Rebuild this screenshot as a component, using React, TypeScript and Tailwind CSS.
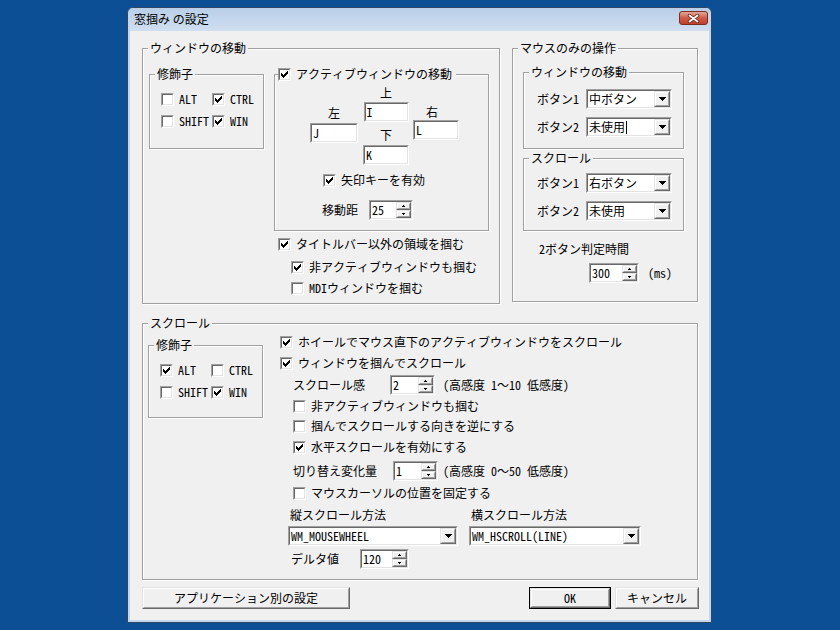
import type { ReactNode } from "react";

const face = "font-['Noto_Sans_Mono_CJK_JP','Noto_Sans_CJK_JP',sans-serif]";

type Box = { className?: string; children?: ReactNode };

// classic 3D edges
function Sunken({ className = "", children }: Box) {
  return (
    <div className={`shrink-0 border border-[#a0a0a0] border-r-white border-b-white ${className}`}>
      <div className="flex h-full w-full border border-[#696969] border-r-[#e3e3e3] border-b-[#e3e3e3] bg-white">
        {children}
      </div>
    </div>
  );
}

function Raised({ className = "", children }: Box) {
  return (
    <div className={`shrink-0 border border-[#e3e3e3] border-r-[#696969] border-b-[#696969] ${className}`}>
      <div className="flex h-full w-full items-center justify-center border border-white border-r-[#a0a0a0] border-b-[#a0a0a0] bg-[#f0f0f0]">
        {children}
      </div>
    </div>
  );
}

function Check({ on }: { on?: boolean }) {
  const tick = [
    [1, 3],
    [2, 4],
    [3, 5],
    [4, 4],
    [5, 3],
    [6, 2],
    [7, 1],
  ];
  return (
    <Sunken className="h-[13px] w-[13px]">
      {on && (
        <svg width="9" height="9" viewBox="0 0 9 9" className="block">
          {tick.map(([x, y]) => (
            <rect key={x} x={x} y={y} width="1" height="3" fill="#000" />
          ))}
        </svg>
      )}
    </Sunken>
  );
}

function CheckRow({ on, label, className = "" }: { on?: boolean; label: string; className?: string }) {
  return (
    <div className={`flex h-[14px] items-center gap-[5px] ${className}`}>
      <Check on={on} />
      <span className="whitespace-nowrap">{label}</span>
    </div>
  );
}

function GroupBox({
  label,
  labelClassName = "left-[5px] px-[2px]",
  className = "",
  children,
}: {
  label: ReactNode;
  labelClassName?: string;
  className?: string;
  children?: ReactNode;
}) {
  return (
    <div className={`relative shrink-0 border border-[#a0a0a0] shadow-[inset_1px_1px_0_#fff,1px_1px_0_#fff] ${className}`}>
      <div className={`absolute -top-[8px] flex h-[14px] items-center whitespace-nowrap bg-[#f0f0f0] ${labelClassName}`}>
        {label}
      </div>
      {children}
    </div>
  );
}

function Field({ value, className = "" }: { value: string; className?: string }) {
  return (
    <Sunken className={`h-[20px] ${className}`}>
      <span className="pl-[1px] pt-[1px]">{value}</span>
    </Sunken>
  );
}

function Spin({ value, className = "" }: { value: string; className?: string }) {
  return (
    <Sunken className={`h-[20px] ${className}`}>
      <span className="flex-1 pl-[1px] pt-[1px]">{value}</span>
      <div className="flex w-[15px] flex-col">
        <Raised className="h-[8px]">
          <svg width="3" height="2" className="block">
            <rect x="1" y="0" width="1" height="1" />
            <rect x="0" y="1" width="3" height="1" />
          </svg>
        </Raised>
        <Raised className="h-[8px]">
          <svg width="3" height="2" className="block">
            <rect x="0" y="0" width="3" height="1" />
            <rect x="1" y="1" width="1" height="1" />
          </svg>
        </Raised>
      </div>
    </Sunken>
  );
}

function Combo({ value, caret, className = "" }: { value: string; caret?: boolean; className?: string }) {
  return (
    <Sunken className={`h-[20px] ${className}`}>
      <span className="flex flex-1 items-center pl-[1px] whitespace-nowrap">
        {value}
        {caret && <span className="ml-[1px] h-[13px] w-px bg-black" />}
      </span>
      <Raised className="h-full w-[16px]">
        <svg width="7" height="4" className="block">
          <rect x="0" y="0" width="7" height="1" />
          <rect x="1" y="1" width="5" height="1" />
          <rect x="2" y="2" width="3" height="1" />
          <rect x="3" y="3" width="1" height="1" />
        </svg>
      </Raised>
    </Sunken>
  );
}

function ComboRow({ label, value, caret, className = "" }: { label: string; value: string; caret?: boolean; className?: string }) {
  return (
    <div className={`flex h-[20px] items-center ${className}`}>
      <span className="w-[49px] whitespace-nowrap">{label}</span>
      <Combo value={value} caret={caret} className="w-[86px]" />
    </div>
  );
}

function Modifiers({
  alt,
  ctrl,
  shift,
  win,
  className = "",
}: {
  alt?: boolean;
  ctrl?: boolean;
  shift?: boolean;
  win?: boolean;
  className?: string;
}) {
  return (
    <GroupBox label="修飾子" className={`w-[115px] pl-[11px] pt-[17px] ${className}`}>
      <div className="grid grid-cols-[51px_auto] gap-y-[8px]">
        <CheckRow on={alt} label="ALT" />
        <CheckRow on={ctrl} label="CTRL" />
        <CheckRow on={shift} label="SHIFT" />
        <CheckRow on={win} label="WIN" />
      </div>
    </GroupBox>
  );
}

function Button({ children, className = "", isDefault }: Box & { isDefault?: boolean }) {
  if (isDefault) {
    return (
      <div className={`h-[22px] border border-black ${className}`}>
        <Raised className="h-full w-full">{children}</Raised>
      </div>
    );
  }
  return <Raised className={`h-[22px] ${className}`}>{children}</Raised>;
}

function ActiveMove() {
  return (
    <GroupBox
      label={
        <>
          <Check on />
          <span>アクティブウィンドウの移動</span>
        </>
      }
      labelClassName="left-[3px] gap-[5px] pr-[4px]"
      className="h-[157px] w-[215px] pl-[35px] pt-[11px]"
    >
      <div className="flex items-start">
        <div className="mt-[20px] flex w-[48px] flex-col items-center">
          <span>左</span>
          <Field value="J" className="mt-[3px] w-[48px]" />
        </div>
        <div className="ml-[5px] flex w-[46px] flex-col items-center">
          <span>上</span>
          <Field value="I" className="mt-[2px] w-[45px]" />
          <span className="mt-[6px]">下</span>
          <Field value="K" className="mt-[3px] w-[46px]" />
        </div>
        <div className="ml-[4px] mt-[19px] flex w-[46px] flex-col">
          <span className="ml-[13px]">右</span>
          <Field value="L" className="mt-[1px] w-[46px]" />
        </div>
      </div>
      <CheckRow on label="矢印キーを有効" className="ml-[13px] mt-[8px]" />
      <div className="ml-[12px] mt-[13px] flex h-[20px] items-center">
        <span className="w-[47px]">移動距</span>
        <Spin value="25" className="w-[44px]" />
      </div>
    </GroupBox>
  );
}

export default function App() {
  return (
    <div className={`h-[630px] w-[840px] bg-[#0d4f95] pl-[127px] pt-[7px] text-[12px] leading-[14px] text-black ${face}`}>
      <div className="flex h-[616px] w-[585px] flex-col overflow-hidden rounded-t-[6px] border border-[#2d4866] bg-[#c4d6ec] px-[2px] pb-[2px]">
        {/* title bar */}
        <div className="flex h-[23px] shrink-0 items-start bg-gradient-to-b from-[#b9cee8] to-[#d0dff0] pl-[4px] pr-[1px]">
          <span className="mt-[4px] font-['Noto_Sans_CJK_JP',sans-serif]">窓掴み の設定</span>
          <div className="ml-auto mt-[3px] flex h-[14px] w-[29px] items-center justify-center rounded-[3px] border border-[#7a2d24] bg-gradient-to-b from-[#e3a597] via-[#cd5b47] to-[#c0402c]">
            <svg width="13" height="9" viewBox="0 0 13 9" className="block">
              <path d="M2.5 1.5 10.5 7.5 M10.5 1.5 2.5 7.5" stroke="#5b2019" strokeWidth="3.4" strokeLinecap="round" />
              <path d="M2.5 1.5 10.5 7.5 M10.5 1.5 2.5 7.5" stroke="#fff" strokeWidth="1.8" strokeLinecap="round" />
            </svg>
          </div>
        </div>

        <div className="flex h-[589px] flex-col bg-[#f0f0f0] pl-[12px] pt-[17px]">
          <div className="flex items-start">
            <GroupBox label="ウィンドウの移動" className="h-[256px] w-[358px] pl-[6px] pt-[25px]">
              <div className="flex items-start">
                <Modifiers ctrl win className="h-[75px]" />
                <div className="ml-[10px] flex flex-col">
                  <ActiveMove />
                  <CheckRow on label="タイトルバー以外の領域を掴む" className="ml-[4px] mt-[6px]" />
                  <CheckRow on label="非アクティブウィンドウも掴む" className="ml-[17px] mt-[9px]" />
                  <CheckRow label="MDIウィンドウを掴む" className="ml-[17px] mt-[7px]" />
                </div>
              </div>
            </GroupBox>

            <GroupBox label="マウスのみの操作" className="ml-[12px] h-[254px] w-[186px] pl-[10px] pt-[23px]">
              <GroupBox label="ウィンドウの移動" className="h-[77px] w-[161px] pl-[13px] pt-[16px]">
                <ComboRow label="ボタン1" value="中ボタン" />
                <ComboRow label="ボタン2" value="未使用" caret className="mt-[8px]" />
              </GroupBox>
              <GroupBox label="スクロール" className="mt-[9px] h-[73px] w-[161px] pl-[13px] pt-[14px]">
                <ComboRow label="ボタン1" value="右ボタン" />
                <ComboRow label="ボタン2" value="未使用" className="mt-[8px]" />
              </GroupBox>
              <div className="ml-[16px] mt-[11px]">2ボタン判定時間</div>
              <div className="mt-[7px] flex h-[20px] items-center">
                <Spin value="300" className="ml-[66px] w-[50px]" />
                <span className="ml-[9px]">(ms)</span>
              </div>
            </GroupBox>
          </div>

          <GroupBox label="スクロール" className="mt-[19px] h-[257px] w-[556px] pl-[5px] pt-[11px]">
            <div className="flex items-start">
              <Modifiers alt win className="mt-[10px] h-[73px]" />
              <div className="ml-[17px] flex flex-col">
                <CheckRow on label="ホイールでマウス直下のアクティブウィンドウをスクロール" />
                <CheckRow on label="ウィンドウを掴んでスクロール" className="mt-[7px]" />
                <div className="ml-[13px] mt-[5px] flex h-[20px] items-center">
                  <span className="w-[97px]">スクロール感</span>
                  <Spin value="2" className="w-[45px]" />
                  <span className="ml-[8px]">(高感度 1〜10 低感度)</span>
                </div>
                <CheckRow label="非アクティブウィンドウも掴む" className="ml-[13px] mt-[4px]" />
                <CheckRow label="掴んでスクロールする向きを逆にする" className="ml-[13px] mt-[6px]" />
                <CheckRow on label="水平スクロールを有効にする" className="ml-[13px] mt-[7px]" />
                <div className="ml-[13px] mt-[7px] flex h-[20px] items-center">
                  <span className="w-[100px]">切り替え変化量</span>
                  <Spin value="1" className="w-[45px]" />
                  <span className="ml-[5px]">(高感度 0〜50 低感度)</span>
                </div>
                <CheckRow label="マウスカーソルの位置を固定する" className="ml-[13px] mt-[5px]" />
                <div className="ml-[10px] mt-[8px] flex">
                  <span className="w-[181px]">縦スクロール方法</span>
                  <span>横スクロール方法</span>
                </div>
                <div className="ml-[8px] mt-[4px] flex">
                  <Combo value="WM_MOUSEWHEEL" className="w-[170px]" />
                  <Combo value="WM_HSCROLL(LINE)" className="ml-[11px] w-[172px]" />
                </div>
                <div className="ml-[11px] mt-[3px] flex h-[20px] items-center">
                  <span className="w-[69px]">デルタ値</span>
                  <Spin value="120" className="w-[49px]" />
                </div>
              </div>
            </div>
          </GroupBox>

          <div className="mt-[7px] flex">
            <Button className="w-[208px]">アプリケーション別の設定</Button>
            <Button isDefault className="ml-[179px] w-[82px]">
              OK
            </Button>
            <Button className="ml-[4px] w-[84px]">キャンセル</Button>
          </div>
        </div>
      </div>
    </div>
  );
}
